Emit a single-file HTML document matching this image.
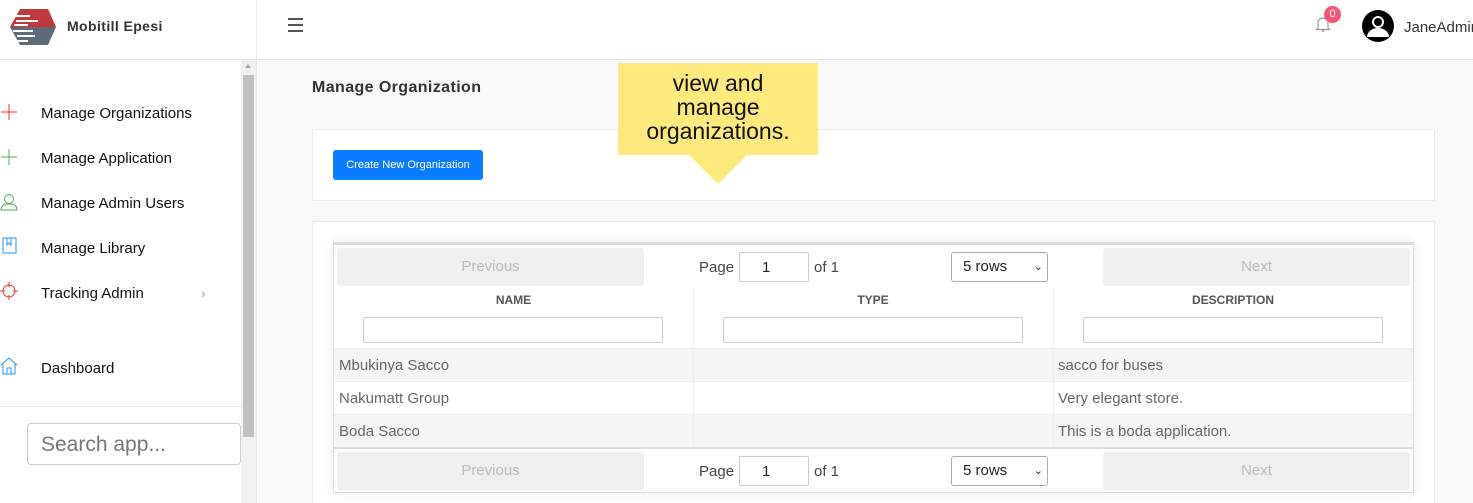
<!DOCTYPE html>
<html><head><meta charset="utf-8"><style>
*{box-sizing:border-box;margin:0;padding:0}
html,body{width:1473px;height:503px;overflow:hidden}
body{font-family:"Liberation Sans",sans-serif;background:#f8f9fa;position:relative}
.hdr{position:absolute;left:0;top:0;width:1473px;height:60px;background:#fff;border-bottom:1px solid #e5e5e5}
.brand{position:absolute;left:0;top:0;width:257px;height:60px;border-right:1px solid #e8e8e8}
.side{position:absolute;left:0;top:60px;width:257px;height:443px;background:#fff;border-right:1px solid #e8e8e8}
.nav{position:absolute;left:41px;font-size:15px;color:#111}
.ic{position:absolute;left:0}
.sb{position:absolute;left:241px;top:60px;width:15px;height:443px;background:#f1f1f1}
.th{position:absolute;left:243px;top:75px;width:11px;height:362px;background:#c1c1c1}
.card{position:absolute;left:312px;width:1123px;background:#fff;border:1px solid #ebebeb}
.btn{position:absolute;background:#efefef;color:#bbb;font-size:15px;text-align:center;line-height:38px;border-radius:3px}
.pg{position:absolute;font-size:15px;color:#444}
.inp{position:absolute;border:1px solid #ccc;background:#fff;border-radius:2px;font-size:15px;color:#222;padding-left:22px;line-height:28px}
.sel{position:absolute;border:1px solid #aaa;border-radius:3px;font-size:15px;color:#222;padding-left:11px;line-height:28px;background:#fff}
.col{position:absolute;font-size:12px;font-weight:bold;color:#555;text-align:center}
.row{position:absolute;left:334px;width:1079px;height:33px;font-size:15px;color:#666;line-height:33px;border-top:1px solid #eee}
.row span{position:absolute}
.vl{position:absolute;width:1px;height:160px;background:#eee;z-index:2}
</style></head><body>
<div class="hdr"></div>
<div class="brand">
<svg style="position:absolute;left:10px;top:9px" width="46" height="36" viewBox="0 0 46 36">
<polygon points="10,0 38,0 46,18 0,18 10,0" fill="#c0393b"/>
<polygon points="0,18 46,18 38,36 10,36" fill="#5f6a7a"/>
<g fill="#fff"><rect x="2" y="6" width="18" height="2"/><rect x="6" y="11" width="22" height="2"/><rect x="4" y="15" width="14" height="2"/><rect x="3" y="21" width="20" height="2"/><rect x="7" y="26" width="18" height="2"/><rect x="4" y="31" width="14" height="2"/></g>
</svg>
<div style="position:absolute;left:67px;top:18px;font-size:14px;font-weight:bold;color:#333;letter-spacing:.4px">Mobitill Epesi</div>
</div>
<div style="position:absolute;left:288px;top:18px;width:15px">
<div style="height:2px;background:#555;margin-bottom:4px"></div><div style="height:2px;background:#555;margin-bottom:4px"></div><div style="height:2px;background:#555"></div></div>
<svg style="position:absolute;left:1315px;top:15px" width="16" height="18" viewBox="0 0 16 18"><path d="M3 13V8a5 5 0 0 1 10 0v5l1.5 1.5h-13z M6.5 16h3" fill="none" stroke="#999" stroke-width="1.2"/></svg>
<div style="position:absolute;left:1324px;top:6px;width:17px;height:17px;border-radius:50%;background:#f4567a;color:#fff;font-size:11px;text-align:center;line-height:17px">0</div>
<svg style="position:absolute;left:1362px;top:10px" width="32" height="32" viewBox="0 0 32 32"><circle cx="16" cy="16" r="16" fill="#000"/><circle cx="16" cy="12" r="6" fill="#fff"/><path d="M5 27a11 9 0 0 1 22 0z" fill="#fff"/><circle cx="16" cy="12" r="4" fill="#000"/></svg>
<div style="position:absolute;left:1404px;top:19px;font-size:15px;color:#333;white-space:nowrap">JaneAdmin</div>

<div class="side">
<svg class="ic" style="top:43px" width="18" height="18"><path d="M9 1v16M1 9h16" stroke="#e53935" stroke-width="1"/></svg>
<div class="nav" style="top:45px">Manage Organizations</div>
<svg class="ic" style="top:88px" width="18" height="18"><path d="M9 1v16M1 9h16" stroke="#4caf50" stroke-width="1"/></svg>
<div class="nav" style="top:90px">Manage Application</div>
<svg class="ic" style="top:133px" width="18" height="18"><circle cx="9" cy="6" r="4.5" fill="none" stroke="#4caf50"/><path d="M1 17c0-4 3-6 5-6h6c2 0 5 2 5 6z" fill="none" stroke="#4caf50"/></svg>
<div class="nav" style="top:135px">Manage Admin Users</div>
<svg class="ic" style="top:177px" width="18" height="18"><rect x="3" y="1" width="13" height="15" fill="none" stroke="#2196f3"/><path d="M7 1v7l2-2 2 2V1" fill="none" stroke="#2196f3"/></svg>
<div class="nav" style="top:180px">Manage Library</div>
<svg class="ic" style="top:222px" width="18" height="18"><circle cx="9" cy="9" r="6" fill="none" stroke="#e53935"/><path d="M9 0v5M9 13v5M0 9h5M13 9h5" stroke="#e53935"/></svg>
<div class="nav" style="top:225px">Tracking Admin</div>
<div style="position:absolute;left:201px;top:225px;color:#aaa;font-size:14px">›</div>
<svg class="ic" style="top:297px" width="18" height="18"><path d="M1 8L9 1l8 7M3 7v10h12V7M7 17v-6h4v6" fill="none" stroke="#2196f3"/></svg>
<div class="nav" style="top:300px">Dashboard</div>
<div style="position:absolute;left:0;top:346px;width:241px;height:1px;background:#e8e8e8"></div>
<div style="position:absolute;left:27px;top:363px;width:214px;height:42px;border:1px solid #ccd;border-radius:4px;font-size:21px;color:#777;padding:9px 0 0 13px">Search app...</div>
</div>
<div class="sb"></div><div class="th"></div>
<div style="position:absolute;left:245px;top:64px;width:0;height:0;border-left:3px solid transparent;border-right:3px solid transparent;border-bottom:4px solid #a3a3a3"></div>

<div style="position:absolute;left:312px;top:79px;font-size:16px;font-weight:bold;color:#333;letter-spacing:.4px">Manage Organization</div>
<div class="card" style="top:129px;height:72px"></div>
<div style="position:absolute;left:333px;top:150px;width:150px;height:30px;background:#0a7cff;border-radius:3px;color:#fff;font-size:11px;text-align:center;line-height:30px">Create New Organization</div>

<div class="card" style="top:221px;height:290px"></div>
<div style="position:absolute;left:333px;top:242px;width:1081px;height:251px;border:1px solid #ddd;border-top:3px solid #ddd;background:#fff;box-shadow:0 0 12px rgba(0,0,0,.08)"></div>
<div class="btn" style="left:337px;top:248px;width:307px">Previous</div>
<div class="pg" style="left:699px;top:259px">Page</div>
<div class="inp" style="left:739px;top:252px;width:70px;height:30px;line-height:29px">1</div>
<div class="pg" style="left:814px;top:259px">of 1</div>
<div class="sel" style="left:951px;top:252px;width:97px;height:30px">5 rows<span style="position:absolute;right:4px;top:0;font-size:11px">⌄</span></div>
<div class="btn" style="left:1103px;top:248px;width:307px">Next</div>
<div class="col" style="left:334px;top:293px;width:359px">NAME</div>
<div class="col" style="left:693px;top:293px;width:360px">TYPE</div>
<div class="col" style="left:1053px;top:293px;width:360px">DESCRIPTION</div>
<div class="vl" style="left:693px;top:288px"></div>
<div class="vl" style="left:1053px;top:288px"></div>
<div class="inp" style="left:363px;top:317px;width:300px;height:26px"></div>
<div class="inp" style="left:723px;top:317px;width:300px;height:26px"></div>
<div class="inp" style="left:1083px;top:317px;width:300px;height:26px"></div>
<div class="row" style="top:348px;background:#f5f5f5"><span style="left:5px">Mbukinya Sacco</span><span style="left:724px">sacco for buses</span></div>
<div class="row" style="top:381px"><span style="left:5px">Nakumatt Group</span><span style="left:724px">Very elegant store.</span></div>
<div class="row" style="top:414px;background:#f5f5f5"><span style="left:5px">Boda Sacco</span><span style="left:724px">This is a boda application.</span></div>
<div style="position:absolute;left:334px;top:447px;width:1079px;height:2px;background:#ddd;z-index:3"></div>
<div class="btn" style="left:337px;top:452px;width:307px">Previous</div>
<div class="pg" style="left:699px;top:463px">Page</div>
<div class="inp" style="left:739px;top:456px;width:70px;height:30px;line-height:29px">1</div>
<div class="pg" style="left:814px;top:463px">of 1</div>
<div class="sel" style="left:951px;top:456px;width:97px;height:30px">5 rows<span style="position:absolute;right:4px;top:0;font-size:11px">⌄</span></div>
<div class="btn" style="left:1103px;top:452px;width:307px">Next</div>

<div style="position:absolute;left:618px;top:63px;width:200px;height:92px;background:#fde97c;text-align:center;font-size:23px;line-height:24px;color:#111;padding-top:8px;z-index:5">view and<br>manage<br>organizations.</div>
<div style="position:absolute;left:689px;top:155px;width:0;height:0;border-left:29px solid transparent;border-right:29px solid transparent;border-top:29px solid #fde97c;z-index:5"></div>
</body></html>
